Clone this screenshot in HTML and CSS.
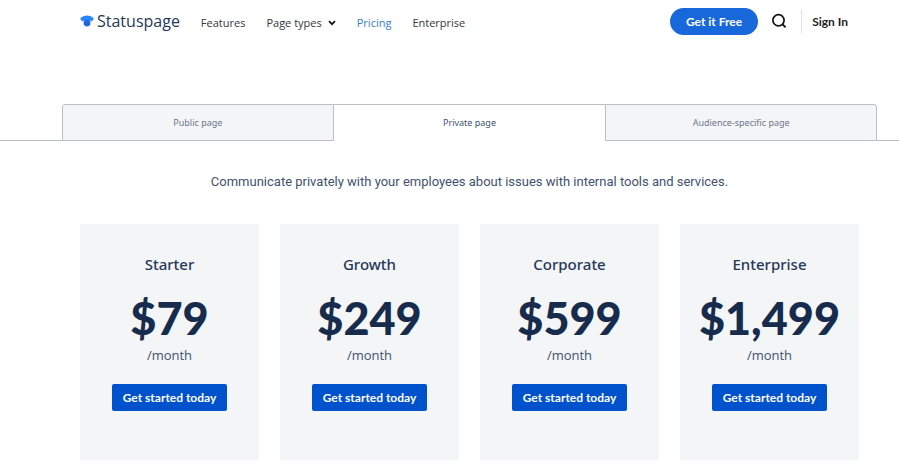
FILE: index.html
```html
<!DOCTYPE html>
<html lang="en">
<head>
<meta charset="utf-8">
<meta name="viewport" content="width=device-width, initial-scale=1">
<title>Statuspage pricing</title>
<link rel="stylesheet" href="styles.css">
</head>
<body>
<header class="header">
  <a class="logo" href="#">
    <svg class="logo-mark" viewBox="0 0 14 12" width="14" height="12" aria-hidden="true">
      <path d="M.3 3.400C4.100-.4 9.900-.4 13.700 3.400c.2.200.2.500 0 .7l-1.900 2.200c-.2.200-.5.200-.7 0-2.500-2.200-5.700-2.200-8.200 0-.2.200-.5.200-.7 0L.3 4.100c-.2-.2-.2-.5 0-.7z" fill="#2684ff"/>
      <circle cx="7" cy="8" r="3.400" fill="#1d66dc"/>
    </svg>
    <span>Statuspage</span>
  </a>
  <nav class="nav" aria-label="Main">
    <a href="#">Features</a>
    <button type="button">Page types
      <svg viewBox="0 0 8 6" width="8" height="6" aria-hidden="true"><path d="M1 1.200 4 4.200 7 1.200" fill="none" stroke="#101214" stroke-width="1.700"/></svg>
    </button>
    <a class="current" href="#" aria-current="page">Pricing</a>
    <a href="#">Enterprise</a>
  </nav>
  <div class="actions">
    <a class="cta" href="#">Get it Free</a>
    <button class="search" type="button" aria-label="Search">
      <svg viewBox="0 0 16 16" width="16" height="16" aria-hidden="true"><circle cx="7.500" cy="7.300" r="5.600" fill="none" stroke="#101214" stroke-width="1.700"/><path d="M11.300 11.100 14.600 14.400" stroke="#101214" stroke-width="1.900"/></svg>
    </button>
    <a class="signin" href="#">Sign In</a>
  </div>
</header>
<main>
  <div class="tabs" role="tablist" aria-label="Page type">
    <button class="tab" type="button" role="tab" aria-selected="false">Public page</button>
    <button class="tab" type="button" role="tab" aria-selected="true">Private page</button>
    <button class="tab" type="button" role="tab" aria-selected="false">Audience-specific page</button>
  </div>
  <p class="intro">Communicate privately with your employees about issues with internal tools and services.</p>
  <div class="plans">
    <section class="plan">
      <h2>Starter</h2>
      <p class="price">$79</p>
      <p class="period">/month</p>
      <a class="start" href="#">Get started today</a>
    </section>
    <section class="plan">
      <h2>Growth</h2>
      <p class="price">$249</p>
      <p class="period">/month</p>
      <a class="start" href="#">Get started today</a>
    </section>
    <section class="plan">
      <h2>Corporate</h2>
      <p class="price">$599</p>
      <p class="period">/month</p>
      <a class="start" href="#">Get started today</a>
    </section>
    <section class="plan">
      <h2>Enterprise</h2>
      <p class="price">$1,499</p>
      <p class="period">/month</p>
      <a class="start" href="#">Get started today</a>
    </section>
  </div>
</main>
</body>
</html>
```
FILE: styles.css
```css
* {
  box-sizing: border-box;
}

body {
  margin: 0;
  background: #fff;
  color: #253858;
  font-family: "Open Sans", "Noto Sans", sans-serif;
}

a {
  color: inherit;
  text-decoration: none;
}

button {
  padding: 0;
  border: 0;
  background: none;
  color: inherit;
  font: inherit;
}

h2,
p {
  margin: 0;
}

.header {
  display: flex;
  align-items: center;
  height: 42px;
  padding: 0 51px 0 80px;
}

.logo {
  display: flex;
  align-items: center;
  gap: 3px;
  font-size: 16px;
  line-height: 24px;
}

.nav {
  display: flex;
  gap: 21px;
  margin-left: 21px;
  padding-top: 4px;
  color: #35383d;
  font-size: 11px;
  line-height: 16px;
}

.nav button {
  display: flex;
  align-items: center;
  gap: 6px;
}

.nav .current {
  color: #357ec4;
}

.actions {
  display: flex;
  align-items: center;
  margin-left: auto;
  color: #1c1e22;
  font-family: Lato, "Open Sans", sans-serif;
  font-size: 12px;
  font-weight: 700;
  line-height: 23px;
}

.cta {
  padding: 2px 16px;
  border-radius: 14px;
  background: #1868db;
  color: #fff;
}

.search {
  display: flex;
  margin: 0 14px 0 13px;
}

.signin {
  padding-left: 10px;
  border-left: 1px solid #dcdfe4;
}

.tabs {
  display: grid;
  grid-template-columns: 62px 1fr 1fr 1fr 22px;
  margin-top: 62px;
}

.tabs::before,
.tabs::after {
  content: "";
  border-bottom: 1px solid #b9bcc6;
}

.tab {
  height: 37px;
  border: 1px solid #b9bec9;
  background: #f4f5f7;
  color: #6b778c;
  font-family: "Noto Sans", sans-serif;
  font-size: 9px;
  line-height: 16px;
}

.tab:first-child {
  border-top-left-radius: 3px;
}

.tab:last-child {
  border-top-right-radius: 3px;
}

.tab[aria-selected="true"] {
  border-width: 1px 0 0;
  background: #fff;
  color: #42526e;
}

.intro {
  margin: 31px 40px 0 80px;
  color: #42526e;
  font-family: Roboto, "Open Sans", sans-serif;
  font-size: 13px;
  line-height: 20px;
  text-align: center;
}

.plans {
  display: grid;
  grid-template-columns: repeat(4, 1fr);
  gap: 21px;
  margin: 32px 40px 8px 80px;
}

.plan {
  display: flex;
  flex-direction: column;
  align-items: center;
  padding: 29px 0 49px;
  background: #f4f5f7;
}

.plan h2 {
  font-family: "Noto Sans", sans-serif;
  font-size: 15px;
  font-weight: 500;
  line-height: 22px;
}

.price {
  margin-top: 18px;
  color: #172b4d;
  font-family: Lato, "Open Sans", sans-serif;
  font-size: 45px;
  font-weight: 900;
  line-height: 50px;
}

.period {
  margin-top: 2px;
  color: #42526e;
  font-size: 13px;
  line-height: 20px;
}

.start {
  margin-top: 19px;
  padding: 2px 11px;
  border-radius: 2px;
  background: #0052cc;
  color: #fff;
  font-family: Lato, "Open Sans", sans-serif;
  font-size: 12px;
  font-weight: 700;
  line-height: 23px;
}
```
